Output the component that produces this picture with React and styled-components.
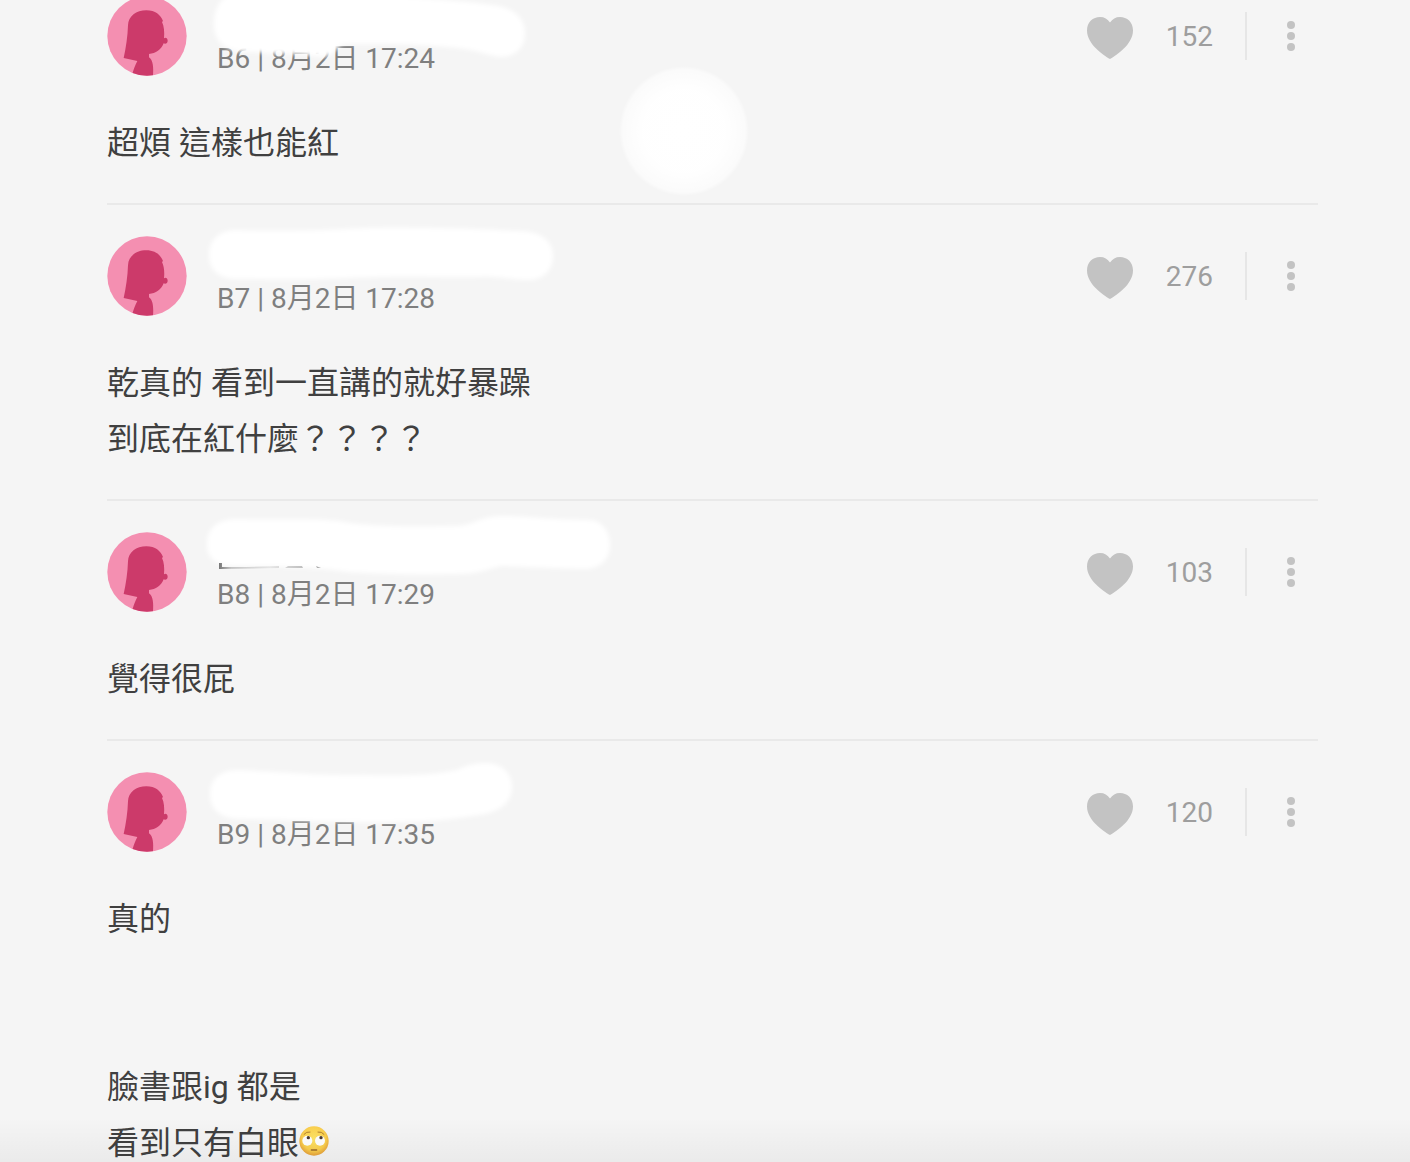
import React from 'react';
import styled, { createGlobalStyle } from 'styled-components';

const GlobalStyle = createGlobalStyle`
  *, *::before, *::after { box-sizing: border-box; }
  body {
    margin: 0;
    background: #f5f5f5;
    color: #404040;
    font-family: Roboto, 'Noto Sans CJK TC', sans-serif;
  }
`;

const Screen = styled.main`
  position: relative;
  height: 100vh;
  overflow: hidden;
`;

const CommentList = styled.ol`
  list-style: none;
  margin: -37px 92px 0 107px;
  padding: 0;
`;

const CommentItem = styled.li`
  padding: 31px 0 32px;
  border-top: 2px solid #e9e9e9;
`;

const Header = styled.header`
  position: relative;
  display: flex;
  align-items: flex-start;
  gap: 30px;
  height: 80px;
`;

const AvatarIcon = styled.svg`
  flex: none;
  width: 80px;
  height: 80px;
`;

const Meta = styled.p`
  flex: 1;
  margin: 0;
  padding-top: 41px;
  color: #7f7f7f;
  font-size: 28px;
  line-height: 44px;
  white-space: nowrap;
`;

const Actions = styled.div`
  display: flex;
  align-items: center;
  height: 80px;
`;

const IconButton = styled.button`
  display: flex;
  align-items: center;
  justify-content: center;
  border: 0;
  padding: 0;
  background: none;
  font: inherit;
  cursor: pointer;
`;

const LikeButton = styled(IconButton)`
  gap: 32px;
  color: #9e9e9e;
  font-size: 28px;
  line-height: 40px;
`;

const HeartIcon = styled.svg`
  width: 47px;
  height: 42px;
  margin-top: 4px;
  fill: #c3c3c3;
`;

const Count = styled.span`
  padding-top: 2px;
`;

const Divider = styled.span`
  width: 2px;
  height: 48px;
  margin: 0 16px 0 32px;
  background: #e6e6e6;
`;

const MoreButton = styled(IconButton)`
  width: 55px;
  height: 48px;
`;

const DotsIcon = styled.svg`
  width: 8px;
  height: 30px;
  fill: #c3c3c3;
`;

const Body = styled.div`
  margin-top: 39px;
  font-size: 32px;
  line-height: 56px;
`;

const Line = styled.p`
  display: flex;
  align-items: center;
  margin: 0;
  min-height: 56px;
`;

const EmojiIcon = styled.svg`
  width: 30px;
  height: 30px;
  margin-bottom: 4px;
`;

const BrushLayer = styled.svg`
  position: absolute;
  inset: 0;
  width: 100%;
  height: 100%;
  overflow: visible;
  pointer-events: none;
`;

const BottomShade = styled.div`
  position: absolute;
  inset: auto 0 0;
  height: 44px;
  background: linear-gradient(rgba(0, 0, 0, 0), rgba(0, 0, 0, 0.045));
  pointer-events: none;
`;

function Avatar() {
  return (
    <AvatarIcon viewBox="0 0 240 240" role="img" aria-label="女生">
      <defs>
        <clipPath id="avatar-disc"><circle cx="120" cy="120" r="119" /></clipPath>
      </defs>
      <circle cx="120" cy="120" r="119" fill="#f48fb1" />
      <path
        clipPath="url(#avatar-disc)"
        fill="#cc3a6a"
        d="M50 186 C57 155 62 120 63 88 C64 60 88 43 118 43 C145 43 161 57 168 75 L165 78 C171 90 173 108 171 127 C176 123 182 127 182 134 C182 141 176 145 170 142 C163 160 146 173 126 174 L126 184 C138 192 140 213 138 240 L74 240 C78 225 84 209 91 195 Z"
      />
    </AvatarIcon>
  );
}

function RollingEyes() {
  return (
    <EmojiIcon viewBox="0 0 90 90" role="img" aria-label="🙄">
      <defs>
        <radialGradient id="face" cx="50%" cy="42%" r="58%">
          <stop offset="0" stopColor="#ffe566" />
          <stop offset="0.7" stopColor="#fbd04e" />
          <stop offset="1" stopColor="#e6a13a" />
        </radialGradient>
      </defs>
      <circle cx="45" cy="45" r="44" fill="url(#face)" />
      <path d="M15 25 Q22 16 33 18 M57 18 Q68 16 75 25" fill="none" stroke="#b5812f" strokeWidth="3" strokeLinecap="round" />
      <circle cx="25" cy="44" r="15" fill="#fff" />
      <circle cx="63" cy="44" r="15" fill="#fff" />
      <circle cx="28" cy="35" r="5" fill="#4b3a30" />
      <circle cx="66" cy="35" r="5" fill="#4b3a30" />
      <path d="M37 72 H53" stroke="#9a6a2a" strokeWidth="4" strokeLinecap="round" />
    </EmojiIcon>
  );
}

const comments = [
  {
    floor: 'B6',
    time: '8月2日 17:24',
    likes: 152,
    lines: ['超煩 這樣也能紅'],
    brush: 'M107 30 C106 8 118 -6 145 -8 L290 0 C330 4 360 5 385 9 C406 11 418 22 418 37 C418 52 408 61 393 61 C378 59 370 53 340 51 C300 47 260 48 238 48 C228 50 228 61 214 61 C200 60 190 57 170 58 L146 56 C124 57 108 50 107 30 Z',
    spot: true,
  },
  {
    floor: 'B7',
    time: '8月2日 17:28',
    likes: 276,
    lines: ['乾真的 看到一直講的就好暴躁', '到底在紅什麼？？？？'],
    brush: 'M102 19 C102 4 112 -6 130 -6 C180 -4 220 -6 260 -8 C310 -9 360 -8 410 -5 C430 -6 446 3 446 20 C446 36 434 45 418 44 C400 43 390 40 370 41 C320 41 280 40 240 42 C200 44 165 43 130 43 C112 43 102 34 102 19 Z',
  },
  {
    floor: 'B8',
    time: '8月2日 17:29',
    likes: 103,
    lines: ['覺得很屁'],
    remnant: true,
    brush: 'M100 13 C100 -4 110 -12 128 -13 C165 -12 200 -14 232 -11 C265 -4 310 -6 350 -6 C372 -8 370 -16 400 -16 C430 -15 450 -12 482 -12 C496 -11 503 0 503 13 C503 28 492 37 478 37 C445 36 420 35 395 34 C380 37 372 42 350 42 C310 43 275 42 240 40 C220 36 200 36 178 35 L125 34 C110 34 100 26 100 13 Z',
  },
  {
    floor: 'B9',
    time: '8月2日 17:35',
    likes: 120,
    lines: ['真的', '', '', '臉書跟ig 都是', '看到只有白眼'],
    emoji: true,
    brush: 'M103 22 C103 6 114 -2 132 -2 C175 0 215 4 260 3 C300 4 325 3 350 -2 C362 -8 370 -9 380 -9 C396 -8 405 2 405 15 C405 30 394 38 378 42 C350 47 320 50 288 50 C240 51 190 48 140 47 C116 48 103 40 103 22 Z',
  },
];

function BrushMarks({ comment }) {
  return (
    <BrushLayer aria-hidden="true">
      <defs>
        <filter id="brush-edge" x="-10%" y="-30%" width="120%" height="160%">
          <feGaussianBlur stdDeviation="2" />
        </filter>
        <radialGradient id="spot-fill">
          <stop offset="0" stopColor="#fff" />
          <stop offset="0.65" stopColor="#fff" stopOpacity="0.95" />
          <stop offset="0.94" stopColor="#fff" stopOpacity="0.6" />
          <stop offset="1" stopColor="#fff" stopOpacity="0" />
        </radialGradient>
        <linearGradient id="remnant-fill">
          <stop offset="0" stopColor="#777" />
          <stop offset="0.12" stopColor="#c4c4c4" />
          <stop offset="0.5" stopColor="#e6e6e6" />
          <stop offset="1" stopColor="#aaa" />
        </linearGradient>
      </defs>
      <path d={comment.brush} fill="#fff" filter="url(#brush-edge)" />
      {comment.remnant && (
        <path d="M112 31 h3 v4 h24 l33 -1 v2 l-60 1 Z M178 36 l3 -2 h14 l1 2 Z M209 34 l5 2 h-4 Z" fill="url(#remnant-fill)" />
      )}
      {comment.spot && <circle cx="577" cy="135" r="65" fill="url(#spot-fill)" />}
    </BrushLayer>
  );
}

function Comment({ comment }) {
  return (
    <CommentItem>
      <Header>
        <Avatar />
        <Meta>{comment.floor} | {comment.time}</Meta>
        <Actions>
          <LikeButton type="button" aria-label={`愛心 ${comment.likes}`}>
            <HeartIcon viewBox="0 0 47 42" aria-hidden="true">
              <path d="M23 42 C16 38 0 27 0 13.5 C0 5 6 0 13 0 C17.5 0 20.5 2 23 5.5 C25.500 2 28.500 0 33 0 C40 0 46 5 46 13.500 C46 27 30 38 23 42 Z" />
            </HeartIcon>
            <Count>{comment.likes}</Count>
          </LikeButton>
          <Divider />
          <MoreButton type="button" aria-label="更多">
            <DotsIcon viewBox="0 0 8 30" aria-hidden="true">
              <circle cx="4" cy="4" r="4" />
              <circle cx="4" cy="15" r="4" />
              <circle cx="4" cy="26" r="4" />
            </DotsIcon>
          </MoreButton>
        </Actions>
        <BrushMarks comment={comment} />
      </Header>
      <Body>
        {comment.lines.map((text, index) => (
          <Line key={index}>
            {text}
            {comment.emoji && index === comment.lines.length - 1 && <RollingEyes />}
          </Line>
        ))}
      </Body>
    </CommentItem>
  );
}

export default function App() {
  return (
    <Screen lang="zh-Hant">
      <GlobalStyle />
      <CommentList>
        {comments.map((comment) => (
          <Comment key={comment.floor} comment={comment} />
        ))}
      </CommentList>
      <BottomShade />
    </Screen>
  );
}
